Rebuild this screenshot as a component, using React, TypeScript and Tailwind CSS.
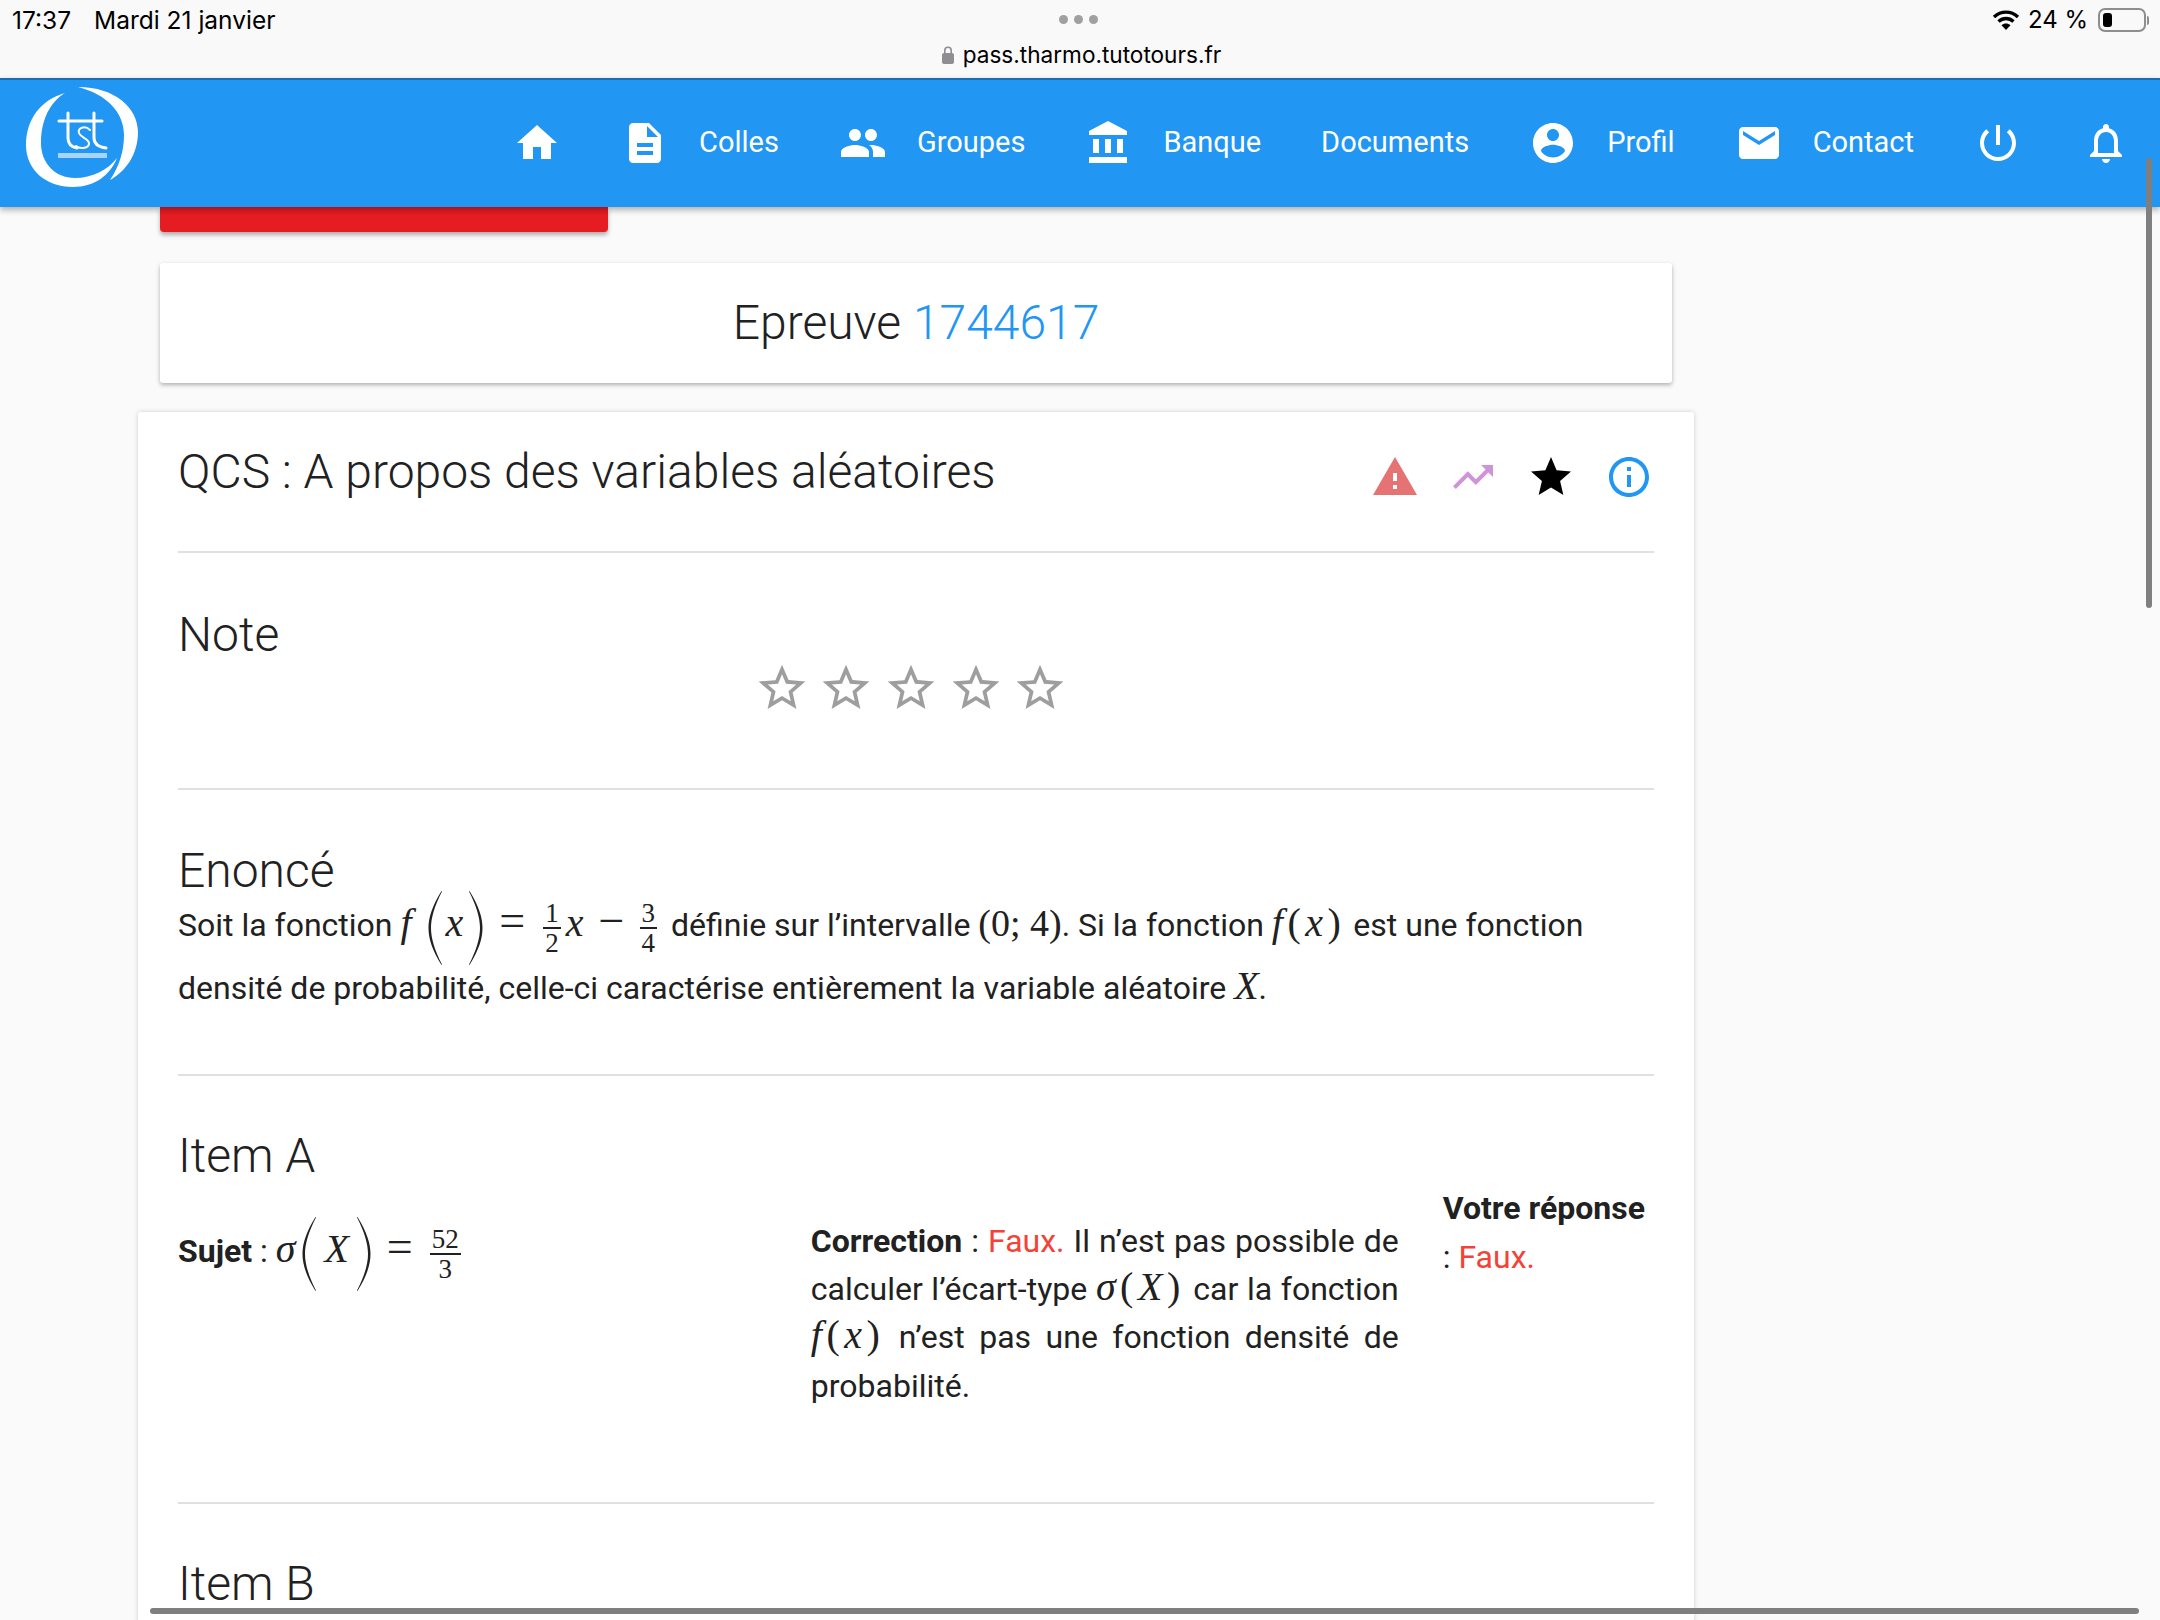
import React from "react";

const P: Record<string, string> = {
  home: "M10 20v-6h4v6h5v-8h3L12 3 2 12h3v8z",
  doc: "M14 2H6c-1.1 0-1.99.9-1.99 2L4 20c0 1.1.89 2 1.99 2H18c1.1 0 2-.9 2-2V8l-6-6zm2 16H8v-2h8v2zm0-4H8v-2h8v2zm-3-5V3.5L18.5 9H13z",
  people: "M16 11c1.66 0 2.99-1.34 2.99-3S17.66 5 16 5c-1.66 0-3 1.34-3 3s1.34 3 3 3zm-8 0c1.66 0 2.99-1.34 2.99-3S9.66 5 8 5C6.34 5 5 6.34 5 8s1.34 3 3 3zm0 2c-2.33 0-7 1.17-7 3.5V19h14v-2.5c0-2.33-4.67-3.5-7-3.5zm8 0c-.29 0-.62.02-.97.05 1.16.84 1.97 1.97 1.97 3.45V19h6v-2.5c0-2.33-4.67-3.5-7-3.5z",
  bank: "M4 10v7h3v-7H4zm6 0v7h3v-7h-3zM2 22h19v-3H2v3zm14-12v7h3v-7h-3zm-4.5-9L2 6v2h19V6l-9.5-5z",
  account: "M12 2C6.48 2 2 6.48 2 12s4.48 10 10 10 10-4.48 10-10S17.52 2 12 2zm0 3c1.66 0 3 1.34 3 3s-1.34 3-3 3-3-1.34-3-3 1.34-3 3-3zm0 14.2c-2.5 0-4.71-1.28-6-3.22.03-1.99 4-3.08 6-3.08 1.99 0 5.97 1.09 6 3.08-1.29 1.94-3.5 3.22-6 3.22z",
  mail: "M20 4H4c-1.1 0-1.99.9-1.99 2L2 18c0 1.1.9 2 2 2h16c1.1 0 2-.9 2-2V6c0-1.1-.9-2-2-2zm0 4l-8 5-8-5V6l8 5 8-5v2z",
  power: "M13 3h-2v10h2V3zm4.83 2.17l-1.42 1.42C17.99 7.86 19 9.81 19 12c0 3.87-3.13 7-7 7s-7-3.13-7-7c0-2.19 1.01-4.14 2.58-5.42L6.17 5.17C4.23 6.82 3 9.26 3 12c0 4.97 4.03 9 9 9s9-4.03 9-9c0-2.74-1.23-5.18-3.17-6.83z",
  bell: "M12 22c1.1 0 2-.9 2-2h-4c0 1.1.9 2 2 2zm6-6v-5c0-3.07-1.63-5.64-4.5-6.32V4c0-.83-.67-1.5-1.5-1.5s-1.5.67-1.5 1.5v.68C7.64 5.36 6 7.92 6 11v5l-2 2v1h16v-1l-2-2zm-2 1H8v-6c0-2.48 1.51-4.5 4-4.5s4 2.02 4 4.5v6z",
  warning: "M1 21h22L12 2 1 21zm12-3h-2v-2h2v2zm0-4h-2v-4h2v4z",
  trend: "M16 6l2.29 2.29-4.88 4.88-4-4L2 16.59 3.41 18l6-6 4 4 6.3-6.29L22 12V6z",
  star: "M12 17.27L18.18 21l-1.64-7.03L22 9.24l-7.19-.61L12 2 9.19 8.63 2 9.24l5.46 4.73L5.82 21z",
  starBorder: "M22 9.24l-7.19-.62L12 2 9.19 8.63 2 9.24l5.46 4.73L5.82 21 12 17.27 18.18 21l-1.63-7.03L22 9.24zM12 15.4l-3.76 2.27 1-4.28-3.32-2.88 4.38-.38L12 6.1l1.71 4.04 4.38.38-3.32 2.88 1 4.28L12 15.4z",
  info: "M11 7h2v2h-2zm0 4h2v6h-2zm1-9C6.48 2 2 6.48 2 12s4.48 10 10 10 10-4.48 10-10S17.52 2 12 2zm0 18c-4.41 0-8-3.59-8-8s3.59-8 8-8 8 3.59 8 8-3.59 8-8 8z",
};

function Ic({ n, className = "w-12 h-12" }: { n: string; className?: string }) {
  return (
    <svg viewBox="0 0 24 24" fill="currentColor" className={`shrink-0 ${className}`}>
      <path d={P[n]} />
    </svg>
  );
}

function Logo() {
  return (
    <svg viewBox="24 10 120 110" className="w-[120px] h-[110px] shrink-0 text-white mb-[17px]">
      <path fill="currentColor" d="M65 23C40 30 26 50 26 75C26 100 46 117 73 117C95 117 110 105 117 88C108 100 92 108 75 108C55 108 41 93 41 73C41 50 50 32 65 23Z" />
      <path fill="currentColor" d="M78 17C115 17 138 38 138 62C138 85 125 102 110 110C120 95 124 80 124 65C124 42 106 24 78 17Z" />
      <g fill="none" stroke="currentColor" strokeWidth="3" strokeLinecap="round">
        <path d="M59 51H102" />
        <path d="M68 43V68C68 74 72 77 77 78" />
        <path d="M94 43V68C94 74 99 77 106 78" />
        <path d="M90 60C85 55 77 58 79 63C81 68 90 69 89 74C88 79 79 79 76 76" strokeWidth="2" />
      </g>
      <rect x="58" y="83" width="49" height="5" fill="#ffffff" opacity="0.6" />
    </svg>
  );
}

const serif = "font-['Liberation_Serif','DejaVu_Serif',serif]";

function V({ children, className = "" }: { children: React.ReactNode; className?: string }) {
  return <span className={`${serif} italic text-[40px] leading-none ${className}`}>{children}</span>;
}

function BigParen({ right = false }: { right?: boolean }) {
  return (
    <svg viewBox="0 0 16 76" className={`inline-block align-middle w-[16px] h-[76px] -my-[12px] ${right ? "-scale-x-100" : ""}`} fill="#212121">
      <path d="M14.5 1C5 16 1.5 28 1.5 38C1.5 48 5 60 14.5 75L15 74.5C7.5 60 4 48 4 38C4 28 7.5 16 15 1.5Z" />
    </svg>
  );
}

function Inline({ a, b }: { a: string; b: string }) {
  return (
    <span className={`${serif} text-[40px] leading-none tracking-[4.5px]`}>
      <i>{a}</i>(<i>{b}</i>)
    </span>
  );
}

function Frac({ a, b, className = "" }: { a: string; b: string; className?: string }) {
  return (
    <span className={`${serif} inline-flex flex-col items-center align-middle text-[27px] leading-[28px] -my-[6px] ${className}`}>
      <span className="px-[2px]">{a}</span>
      <span className="block w-full h-[2px] bg-[#212121]" />
      <span className="px-[2px]">{b}</span>
    </span>
  );
}

function Op({ c, className }: { c: string; className: string }) {
  return <span className={`${serif} text-[46px] leading-none ${className}`}>{c}</span>;
}

function Nav({ icon, label }: { icon?: string; label?: string }) {
  return (
    <div className="flex items-center gap-[30px]">
      {icon && <Ic n={icon} />}
      {label && <span className="text-[29px] leading-none font-normal">{label}</span>}
    </div>
  );
}

function Heading({ children }: { children: React.ReactNode }) {
  return <h2 className="text-[48px] leading-[56px] font-light text-[#212121]">{children}</h2>;
}

function Hr() {
  return <div className="h-[2px] bg-[#e0e0e0]" />;
}

export default function App() {
  return (
    <div className="relative h-[1620px] w-[2160px] overflow-hidden bg-[#fafafa] font-['Roboto',sans-serif] text-[#212121]">
      {/* iOS status bar + address */}
      <div className="relative h-[78px] bg-[#f9f9f9] font-['Inter',sans-serif] text-black">
        <div className="flex items-center justify-between h-[40px] pl-[12px] pr-[11px]">
          <div className="flex gap-[23px] text-[24.5px] leading-none">
            <span>17:37</span>
            <span>Mardi 21 janvier</span>
          </div>
          <div className="flex items-center gap-[8px]">
            <svg viewBox="0 0 28 22" className="w-[28px] h-[22px]" fill="none" stroke="#000" strokeWidth="3.4">
              <path d="M2 8C9 1.5 19 1.5 26 8" />
              <path d="M6.5 12.5C11 8.5 17 8.5 21.5 12.5" />
              <path fill="#000" stroke="none" d="M14 21L9.5 16.2C12 14 16 14 18.5 16.2Z" />
            </svg>
            <span className="text-[24px] leading-none">24 %</span>
            <div className="flex items-center gap-[1px] ml-[2px]">
              <div className="w-[48px] h-[24px] rounded-[7px] border-2 border-[#8e8e8e] p-[3px]">
                <div className="w-[9px] h-full rounded-[3px] bg-black" />
              </div>
              <div className="w-[2px] h-[9px] bg-[#8e8e8e] rounded-r" />
            </div>
          </div>
        </div>
        <div className="absolute left-[1059px] top-[15px] flex gap-[6px]">
          <span className="w-[9px] h-[9px] rounded-full bg-[#a0a0a0]" />
          <span className="w-[9px] h-[9px] rounded-full bg-[#a0a0a0]" />
          <span className="w-[9px] h-[9px] rounded-full bg-[#a0a0a0]" />
        </div>
        <div className="flex items-center justify-center gap-[8px] text-[22.6px] leading-none h-[24px] mt-[3px] pl-[2px]">
          <svg viewBox="0 0 14 20" className="w-[14px] h-[20px]" fill="#8e8e93">
            <path d="M3 9V5.5a4 4 0 0 1 8 0V9h-1.6V5.5a2.4 2.4 0 0 0-4.8 0V9Z" />
            <rect x="1" y="8" width="12" height="11" rx="2" />
          </svg>
          <span>pass.tharmo.tutotours.fr</span>
        </div>
      </div>

      {/* App bar */}
      <header className="relative z-10 h-[129px] bg-[#2196f3] border-t-2 border-[#1a6fb0] text-white shadow-[0_3px_6px_rgba(0,0,0,0.3)] flex items-center pl-[24px] pr-[30px]">
        <Logo />
        <nav className="ml-auto flex items-center gap-[60px] pb-[2px]">
          <Nav icon="home" />
          <Nav icon="doc" label="Colles" />
          <Nav icon="people" label="Groupes" />
          <Nav icon="bank" label="Banque" />
          <Nav label="Documents" />
          <Nav icon="account" label="Profil" />
          <Nav icon="mail" label="Contact" />
          <Nav icon="power" />
          <Nav icon="bell" />
        </nav>
      </header>

      {/* Page */}
      <main className="w-[1556px] ml-[138px]">
        <div className="mx-[22px]">
          <div className="w-[448px] h-[25px] bg-[#e61c23] rounded-b-[4px] shadow-[0_3px_4px_rgba(0,0,0,0.3)]" />
          <div className="mt-[31px] h-[120px] bg-white rounded-[3px] shadow-[0_2px_4px_rgba(0,0,0,0.3)] flex items-center justify-center text-[48px] font-light">
            <span>
              Epreuve <span className="text-[#2196f3]">1744617</span>
            </span>
          </div>
        </div>

        <section className="mt-[29px] bg-white rounded-[3px] shadow-[0_0_5px_rgba(0,0,0,0.18)] px-[40px] h-[1300px]">
          <div className="h-[139px] flex items-start justify-between pt-[32px]">
            <Heading>QCS : A propos des variables aléatoires</Heading>
            <div className="flex gap-[30px] mt-[9px] pr-[1px]">
              <Ic n="warning" className="w-12 h-12 text-[#e57373]" />
              <Ic n="trend" className="w-12 h-12 text-[#ce93d8]" />
              <Ic n="star" className="w-12 h-12 text-black" />
              <Ic n="info" className="w-12 h-12 text-[#2196f3]" />
            </div>
          </div>
          <Hr />

          <div className="h-[235px] pt-[54px]">
            <Heading>Note</Heading>
            <div className="flex justify-center gap-[8.7px] text-[#9e9e9e] -mt-[3px] mr-[10px]">
              {[0, 1, 2, 3, 4].map((i) => (
                <Ic key={i} n="starBorder" className="w-14 h-14" />
              ))}
            </div>
          </div>
          <Hr />

          <div className="h-[284px] pt-[53px]">
            <Heading>Enoncé</Heading>
            <p className="text-[32px] leading-[63px] font-normal -mt-[5px]">
              Soit la fonction <V className="mr-[15px]">f</V>
              <BigParen />
              <V className="ml-[3px] mr-[5px]">x</V>
              <BigParen right />
              <Op c="=" className="mx-[15px]" />
              <Frac a="1" b="2" className="ml-[3px] mr-[2px]" />
              <V className="ml-[3px]">x</V>
              <Op c="−" className="ml-[15px] mr-[13px]" />
              <Frac a="3" b="4" className="mx-[2px]" />
              <span className="ml-[4px]"> définie sur l’intervalle </span>
              <span className={`${serif} text-[38px] leading-none`}>(0; 4)</span>. Si la fonction{" "}
              <Inline a="f" b="x" /> est une fonction densité de probabilité, celle-ci caractérise entièrement la
              variable aléatoire <V>X</V>.
            </p>
          </div>
          <Hr />

          <div className="h-[426px] pt-[52px]">
            <Heading>Item A</Heading>
            <div className="flex">
              <div className="w-[635px] text-[32px] mt-[37px] leading-[60px]">
                <b className="font-bold">Sujet</b> : <V className="mr-[6px]">σ</V>
                <BigParen />
                <V className="mx-[7px]">X</V>
                <BigParen right />
                <Op c="=" className="mx-[15px]" />
                <Frac a="52" b="3" className="mx-[2px]" />
              </div>
              <div className="w-[590px] text-[32px] leading-[48.2px] text-justify mt-[33px]">
                <b className="font-bold">Correction</b> : <span className="text-[#f44336]">Faux.</span> Il n’est pas
                possible de calculer l’écart-type <Inline a="σ" b="X" /> car la fonction <Inline a="f" b="x" /> n’est
                pas une fonction densité de probabilité.
              </div>
              <div className="ml-[44px] w-[212px] text-[32px] leading-[49px]">
                <b className="font-bold">Votre réponse</b> : <span className="text-[#f44336]">Faux.</span>
              </div>
            </div>
          </div>
          <Hr />

          <div className="pt-[52px]">
            <Heading>Item B</Heading>
          </div>
        </section>
      </main>

      {/* Overlay scrollbars */}
      <div className="absolute z-20 right-[8px] top-[158px] w-[6px] h-[450px] rounded-full bg-[#7f7f7f]" />
      <div className="absolute z-20 left-[150px] top-[1608px] w-[1989px] h-[6px] rounded-full bg-[#7f7f7f]" />
    </div>
  );
}
